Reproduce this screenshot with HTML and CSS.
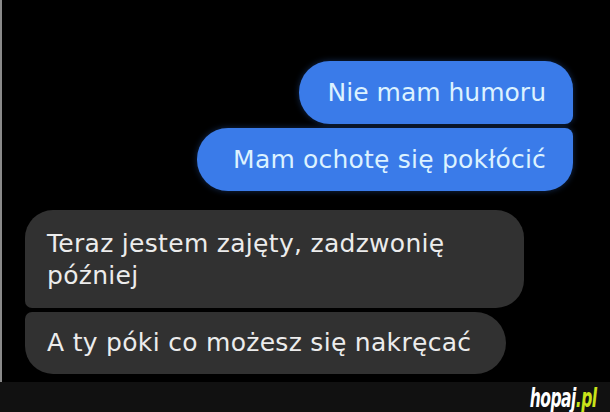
FILE: index.html
```html
<!DOCTYPE html>
<html lang="pl">
<head>
<meta charset="utf-8">
<title>hopaj.pl</title>
<link rel="stylesheet" href="styles.css">
</head>
<body>
<div class="page">
  <div class="photo">
    <div class="msg out out-first">Nie mam humoru</div>
    <div class="msg out out-last">Mam ochotę się pokłócić</div>
    <div class="msg in in-first">Teraz jestem zajęty, zadzwonię<br>później</div>
    <div class="msg in in-last">A ty póki co możesz się nakręcać</div>
  </div>
  <div class="bar">
    <span class="logo">hopaj<span class="logo-pl">.pl</span></span>
  </div>
</div>
</body>
</html>
```

FILE: styles.css
```css
html, body {
  margin: 0;
  padding: 0;
  background: #000;
}
.page {
  width: 610px;
  height: 412px;
  display: flex;
  flex-direction: column;
  overflow: hidden;
}
.photo {
  height: 382px;
  box-sizing: border-box;
  border-left: 2px solid #8a8a8a;
  padding-top: 61px;
  display: flex;
  flex-direction: column;
  background: #000;
}
.msg {
  font-family: "DejaVu Sans", Roboto, sans-serif;
  font-size: 25px;
  line-height: 32px;
  box-sizing: border-box;
}
.out {
  align-self: flex-end;
  margin-right: 37px;
  height: 63px;
  padding: 0 27px 0 29px;
  display: flex;
  align-items: center;
  background: #3a7be9;
  color: #dcf2ff;
  box-shadow: 0 0 6px rgba(58, 123, 233, 0.35);
}
.out-first {
  border-radius: 31px 28px 8px 31px;
}
.out-last {
  margin-top: 4px;
  padding-left: 36px;
  letter-spacing: 0.2px;
  border-radius: 31px 8px 28px 31px;
}
.in {
  align-self: flex-start;
  margin-left: 23px;
  background: #313131;
  color: #ececec;
  padding-left: 22px;
  letter-spacing: 0.3px;
}
.in-first {
  margin-top: 19px;
  width: 499px;
  height: 98px;
  padding-top: 18px;
  border-radius: 28px 28px 28px 7px;
}
.in-last {
  margin-top: 4px;
  width: 481px;
  height: 62px;
  display: flex;
  align-items: center;
  border-radius: 7px 31px 31px 28px;
}
.bar {
  flex: 1;
  background: #111111;
  display: flex;
  align-items: center;
  justify-content: flex-end;
  padding-right: 13px;
}
.logo {
  font-family: "DejaVu Sans Condensed", "DejaVu Sans", sans-serif;
  font-weight: bold;
  font-style: italic;
  font-size: 27px;
  line-height: 27px;
  color: #ffffff;
  letter-spacing: -0.8px;
  display: inline-block;
  transform: scaleX(0.64);
  transform-origin: right center;
}
.logo-pl {
  color: #c9e31a;
}
```
